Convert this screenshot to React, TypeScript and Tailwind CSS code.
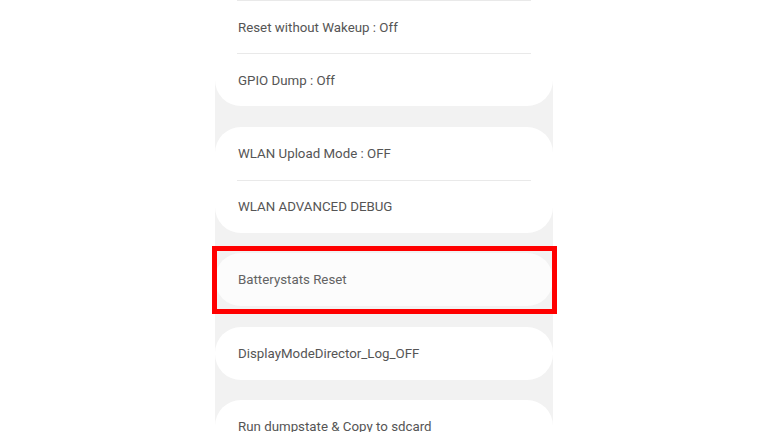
import React from "react";

type Group = { items: string[]; highlight?: boolean };

const groups: Group[] = [
  { items: ["Debug Level : Low", "Reset without Wakeup : Off", "GPIO Dump : Off"] },
  { items: ["WLAN Upload Mode : OFF", "WLAN ADVANCED DEBUG"] },
  { items: ["Batterystats Reset"], highlight: true },
  { items: ["DisplayModeDirector_Log_OFF"] },
  { items: ["Run dumpstate & Copy to sdcard", "Copy to sdcard (include CP Ramdump)"] },
];

const Card: React.FC<{ group: Group }> = ({ group }) => {
  return (
    <div className="relative">
      <div className={`rounded-[26px] px-[22px] ${group.highlight ? "bg-[#fcfcfc]" : "bg-white"}`}>
        {group.items.map((label, i) => (
          <div
            key={label}
            className={`h-[53px] flex items-center pl-px pt-px ${i > 0 ? "border-t border-[#e9e9e9]" : ""}`}
          >
            <span className={`text-[13.3px] ${group.highlight ? "text-[#636363]" : "text-[#555555]"}`}>{label}</span>
          </div>
        ))}
      </div>
      {group.highlight && (
        <div className="absolute -left-[3px] -right-[4px] -top-[7px] -bottom-[8px] border-[5px] border-[#ff0000] pointer-events-none" />
      )}
    </div>
  );
};

export default function App() {
  return (
    <div className="h-screen w-full bg-white overflow-hidden flex justify-center" style={{ fontFamily: "Roboto, 'Noto Sans', sans-serif" }}>
      <div className="w-[338px] bg-[#f2f2f2] -mt-[53px] flex flex-col gap-[20.5px] h-[600px]">
        {groups.map((g, i) => (
          <Card key={i} group={g} />
        ))}
      </div>
    </div>
  );
}
